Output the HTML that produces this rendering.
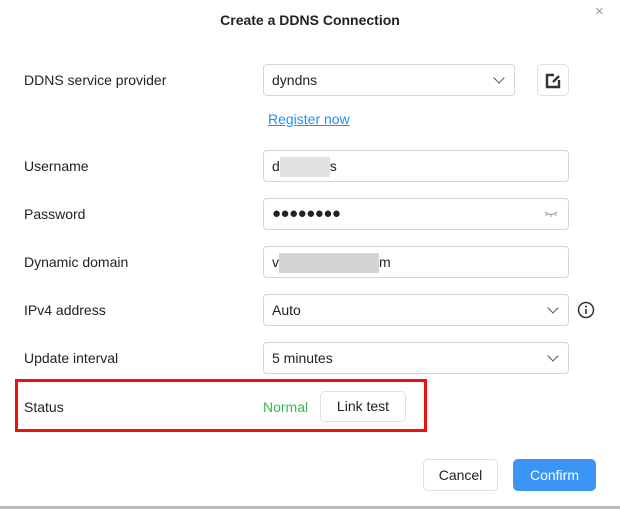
<!DOCTYPE html><html><head><style>
*{box-sizing:border-box;margin:0;padding:0}
body{width:620px;height:509px;background:#fff;font-family:"Liberation Sans",sans-serif;font-size:14px;color:#222;position:relative;overflow:hidden}
.a{position:absolute}
.lbl{position:absolute;left:24px;font-size:14px;color:#222}
.in{position:absolute;left:263px;width:306px;height:32px;border:1px solid #d3d5d9;border-radius:4px;padding-left:8px;line-height:30px;font-size:14px;color:#222}
.chev{position:absolute;right:11px;top:9px;width:8px;height:8px;border-right:1px solid #555;border-bottom:1px solid #555;transform:rotate(45deg)}
.blur{display:inline-block;background:#ddd;height:20px;vertical-align:middle}
.btn{position:absolute;border:1px solid #dcdfe4;border-radius:5px;text-align:center;font-size:14px;background:#fff}
</style></head><body>
<div class="a" style="left:0;top:12px;width:620px;text-align:center;font-weight:bold;font-size:14px">Create a DDNS Connection</div>
<div class="a" style="left:595px;top:3px;font-size:15px;color:#999">×</div>
<div class="lbl" style="top:72px">DDNS service provider</div>
<div class="in" style="top:64px;width:252px">dyndns<span class="chev"></span></div>
<div class="btn" style="left:537px;top:64px;width:32px;height:32px">
<svg width="30" height="30" viewBox="0 0 30 30"><path d="M21 15v7H9V10h7" fill="none" stroke="#333" stroke-width="2.4"/><path d="M15 17l6-6" stroke="#333" stroke-width="2.4"/></svg></div>
<div class="a" style="left:268px;top:111px;color:#1e90ff;text-decoration:underline">Register now</div>
<div class="lbl" style="top:158px">Username</div>
<div class="in" style="top:150px">d<span class="blur" style="width:50px;background:#e2e2e2"></span>s</div>
<div class="lbl" style="top:206px">Password</div>
<div class="in" style="top:198px;letter-spacing:-0.5px;font-size:15px">●●●●●●●●<svg class="a" style="right:10px;top:11px" width="14" height="8"><path d="M1 2q6 5 12 0M3 4l-1 2M7 5v2M11 4l1 2" fill="none" stroke="#999" stroke-width="1"/></svg></div>
<div class="lbl" style="top:254px">Dynamic domain</div>
<div class="in" style="top:246px">v<span class="blur" style="width:100px;background:#d4d4d4"></span>m</div>
<div class="lbl" style="top:302px">IPv4 address</div>
<div class="in" style="top:294px">Auto<span class="chev"></span></div>
<svg class="a" style="left:577px;top:301px" width="18" height="18"><circle cx="9" cy="9" r="7.5" fill="none" stroke="#333" stroke-width="1.5"/><path d="M9 8v5" stroke="#333" stroke-width="1.6"/><circle cx="9" cy="5.5" r="1" fill="#333"/></svg>
<div class="lbl" style="top:350px">Update interval</div>
<div class="in" style="top:342px">5 minutes<span class="chev"></span></div>
<div class="a" style="left:15px;top:379px;width:412px;height:53px;border:3px solid #f01010"></div>
<div class="lbl" style="top:399px">Status</div>
<div class="a" style="left:263px;top:399px;color:#2ebd4e">Normal</div>
<div class="btn" style="left:320px;top:391px;width:86px;height:31px;line-height:29px">Link test</div>
<div class="btn" style="left:423px;top:459px;width:75px;height:32px;line-height:30px">Cancel</div>
<div class="btn" style="left:513px;top:459px;width:83px;height:32px;line-height:30px;background:#3a95f7;border-color:#3a95f7;color:#fff">Confirm</div>
<div class="a" style="left:0;top:506px;width:620px;height:3px;background:#bbb"></div>
</body></html>
